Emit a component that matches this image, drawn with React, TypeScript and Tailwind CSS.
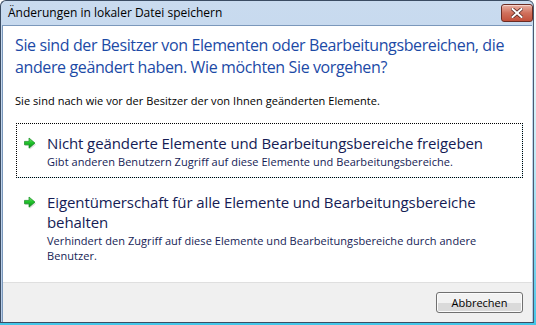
import React from "react";

const GreenArrow: React.FC<{ id: string }> = ({ id }) => (
  <svg width="14" height="13" viewBox="0 0 14 13" className="shrink-0">
    <defs>
      <linearGradient id={id} x1="0" y1="0" x2="0" y2="1">
        <stop offset="0" stopColor="#7be874" />
        <stop offset="0.45" stopColor="#22c52c" />
        <stop offset="1" stopColor="#0b8a1a" />
      </linearGradient>
    </defs>
    <path
      d="M1.5 5.2 H6.5 V1.8 L12.5 6.7 L6.5 11.6 V8.2 H1.5 Z"
      fill="#000"
      opacity="0.12"
      transform="translate(0.6 0.8)"
    />
    <path
      d="M1.5 4.4 H6 V1 L12 6.1 L6 11.2 V7.8 H1.5 Z"
      fill={`url(#${id})`}
      stroke="#138a20"
      strokeWidth="0.7"
      strokeLinejoin="round"
    />
  </svg>
);

const CommandLink: React.FC<{
  id: string;
  title: string[];
  desc: string[];
  focused?: boolean;
}> = ({ id, title, desc, focused }) => (
  <div
    className={
      "flex gap-[10px] pl-[6px] pr-2 pt-[9px] pb-[8px] " +
      (focused
        ? "outline outline-1 outline-dotted outline-black shadow-[0_1px_0_0_#cdeefa,1px_0_0_0_#cdeefa]"
        : "")
    }
  >
    <div className="pt-[4px]">
      <GreenArrow id={id} />
    </div>
    <div className="flex flex-col text-[#151c55]">
      {title.map((t) => (
        <div key={t} className="text-[15px] leading-[20px] tracking-[-0.1px]">
          {t}
        </div>
      ))}
      <div className="mt-[1px]">
        {desc.map((d) => (
          <div key={d} className="text-[11px] leading-[15px] tracking-[0.05px]">
            {d}
          </div>
        ))}
      </div>
    </div>
  </div>
);

export default function App() {
  return (
    <div
      className="w-[536px] h-[325px] overflow-hidden bg-gradient-to-b from-[#ffffff] via-[#bfe9f6] to-[#41c6e8]"
      style={{ fontFamily: "'Open Sans', 'Noto Sans', sans-serif" }}
    >
      <div className="w-[534px] h-[323px] flex flex-col rounded-t-[6px] border border-[#3b4c63] border-r-[#4a5a70] bg-gradient-to-b from-[#c9dbef] to-[#b6cce7]">
        {/* title bar */}
        <div className="h-[24px] flex items-start shrink-0">
          <div className="pl-[7px] pt-[4px] text-[12px] leading-[16px] text-black">
            Änderungen in lokaler Datei speichern
          </div>
          <div className="ml-auto mr-[0px] mt-[3px] w-[32px] h-[18px] rounded-[3px] border border-[#6b2c24] bg-gradient-to-b from-[#e8b0a4] via-[#d0705c] to-[#c2503b] flex items-center justify-center shadow-[inset_0_1px_0_#f6d4cc]">
            <svg width="12" height="10" viewBox="0 0 12 10">
              <path
                d="M1.5 1 L10.5 9 M10.5 1 L1.5 9"
                stroke="#5a2a24"
                strokeWidth="3.6"
                strokeLinecap="square"
              />
              <path
                d="M1.5 1 L10.5 9 M10.5 1 L1.5 9"
                stroke="#ffffff"
                strokeWidth="2"
                strokeLinecap="square"
              />
            </svg>
          </div>
        </div>

        {/* client area */}
        <div className="flex-1 flex flex-col bg-white ml-[1px] mr-[1px] border-l border-t border-[#7b98bb]">
          <div className="flex-1 flex flex-col pl-[12px] pr-[10px]">
            <div className="pt-[8px] text-[16px] leading-[22px] text-[#1c4aa6] tracking-[-0.38px]">
              <div>Sie sind der Besitzer von Elementen oder Bearbeitungsbereichen, die</div>
              <div>andere geändert haben. Wie möchten Sie vorgehen?</div>
            </div>
            <div className="mt-[15px] text-[11px] leading-[15px] text-black tracking-[0.05px]">
              Sie sind nach wie vor der Besitzer der von Ihnen geänderten Elemente.
            </div>
            <div className="mt-[16px] ml-[2px] flex flex-col gap-[6px]">
              <CommandLink
                id="a1"
                focused
                title={["Nicht geänderte Elemente und Bearbeitungsbereiche freigeben"]}
                desc={["Gibt anderen Benutzern Zugriff auf diese Elemente und Bearbeitungsbereiche."]}
              />
              <CommandLink
                id="a2"
                title={["Eigentümerschaft für alle Elemente und Bearbeitungsbereiche", "behalten"]}
                desc={[
                  "Verhindert den Zugriff auf diese Elemente und Bearbeitungsbereiche durch andere",
                  "Benutzer.",
                ]}
              />
            </div>
          </div>

          {/* footer */}
          <div className="h-[40px] shrink-0 bg-[#f0f0f0] border-t border-[#dfdfdf] flex items-center justify-end pr-[9px]">
            <button className="w-[87px] h-[21px] rounded-[3px] border border-[#707070] bg-gradient-to-b from-[#f2f2f2] from-50% to-[#dadada] to-50% text-[11px] leading-[15px] text-black shadow-[inset_0_0_0_1px_#fbfbfb]">
              Abbrechen
            </button>
          </div>
        </div>
      </div>
    </div>
  );
}
